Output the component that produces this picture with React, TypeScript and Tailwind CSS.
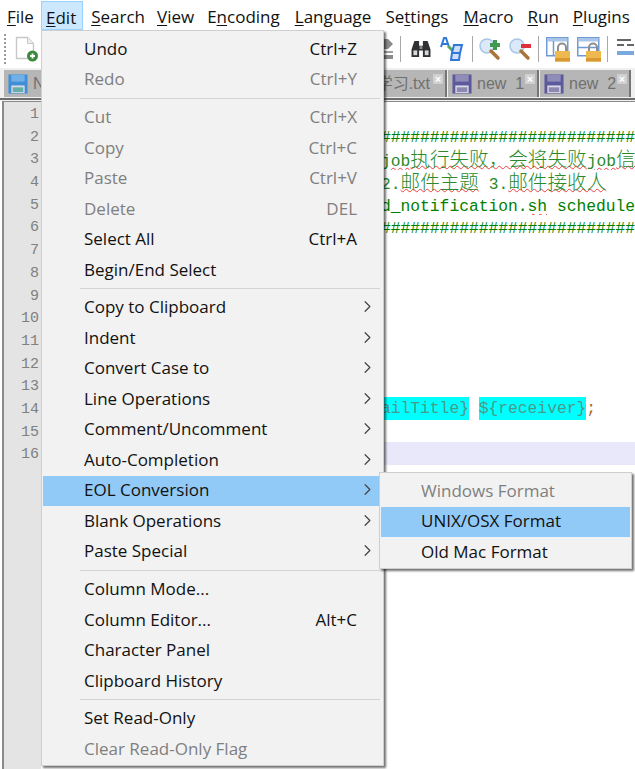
import { ChevronRight } from "lucide-react";

const ui = "font-['Open_Sans','Noto_Sans',sans-serif]";

const menuBar = [
  { pre: "", key: "F", post: "ile", ml: "ml-[7px]" },
  { pre: "", key: "E", post: "dit", ml: "ml-[13px]" },
  { pre: "", key: "S", post: "earch", ml: "ml-[14px]" },
  { pre: "", key: "V", post: "iew", ml: "ml-[12px]" },
  { pre: "E", key: "n", post: "coding", ml: "ml-[13px]" },
  { pre: "", key: "L", post: "anguage", ml: "ml-[15px]" },
  { pre: "Se", key: "t", post: "tings", ml: "ml-[14px]" },
  { pre: "", key: "M", post: "acro", ml: "ml-[15px]" },
  { pre: "", key: "R", post: "un", ml: "ml-[14px]" },
  { pre: "", key: "P", post: "lugins", ml: "ml-[14px]" },
];

type Item = { label?: string; hint?: string; off?: boolean; sub?: boolean; active?: boolean; sep?: boolean };

const editMenu: Item[] = [
  { label: "Undo", hint: "Ctrl+Z" },
  { label: "Redo", hint: "Ctrl+Y", off: true },
  { sep: true },
  { label: "Cut", hint: "Ctrl+X", off: true },
  { label: "Copy", hint: "Ctrl+C", off: true },
  { label: "Paste", hint: "Ctrl+V", off: true },
  { label: "Delete", hint: "DEL", off: true },
  { label: "Select All", hint: "Ctrl+A" },
  { label: "Begin/End Select" },
  { sep: true },
  { label: "Copy to Clipboard", sub: true },
  { label: "Indent", sub: true },
  { label: "Convert Case to", sub: true },
  { label: "Line Operations", sub: true },
  { label: "Comment/Uncomment", sub: true },
  { label: "Auto-Completion", sub: true },
  { label: "EOL Conversion", sub: true, active: true },
  { label: "Blank Operations", sub: true },
  { label: "Paste Special", sub: true },
  { sep: true },
  { label: "Column Mode..." },
  { label: "Column Editor...", hint: "Alt+C" },
  { label: "Character Panel" },
  { label: "Clipboard History" },
  { sep: true },
  { label: "Set Read-Only" },
  { label: "Clear Read-Only Flag", off: true },
];

function MenuRow({ item }: { item: Item }) {
  if (item.sep) {
    return (
      <div className="h-[7.25px] flex items-center pl-[38px] pr-[3px]">
        <div className="h-px w-full bg-[#d4d4d4]" />
      </div>
    );
  }
  return (
    <div
      className={`h-[30.5px] mx-[1px] pb-[2px] flex items-center pl-[41px] pr-[25px] text-[17px] leading-none ${
        item.active ? "bg-[#91c9f7]" : ""
      } ${item.off ? "text-[#7f7f7f]" : "text-[#111111]"}`}
    >
      <span className="flex-1 whitespace-nowrap">{item.label}</span>
      {item.hint && <span>{item.hint}</span>}
      {item.sub && <ChevronRight size={19} strokeWidth={1.5} className="text-[#444] -mr-[20px]" />}
    </div>
  );
}

function Floppy({ tint }: { tint: "blue" | "purple" }) {
  const outer = tint === "blue" ? "#3f8fd8" : "#5c5a9c";
  const inner = tint === "blue" ? "#6fb0e6" : "#8f8cb8";
  const label = tint === "blue" ? "#64b0a8" : "#8d88b0";
  return (
    <svg width="20" height="20" viewBox="0 0 21 21" className="shrink-0">
      <rect x="0.5" y="0.5" width="20" height="20" fill={outer} />
      <rect x="3.5" y="1" width="14" height="7" fill={inner} />
      <rect x="3.5" y="12" width="14" height="8" fill="#d8d8e4" />
      <rect x="5" y="14" width="11" height="5" fill={label} />
    </svg>
  );
}

function TabClose() {
  return (
    <span className="absolute right-[2px] top-[4px] w-[10px] h-[10px] bg-[#d0d0d0] text-white text-[11px] leading-[10px] text-center font-['Liberation_Sans',sans-serif] font-bold">
      ×
    </span>
  );
}

function Tab({ w, children }: { w: string; children: React.ReactNode }) {
  return (
    <div className={`relative h-[27px] ${w} shrink-0 bg-[#b6b6b6] border-r-2 border-[#757575] flex items-center pl-[4px] gap-[5px] text-[#707070] text-[16px] leading-none font-['Liberation_Sans',sans-serif] overflow-hidden`}>
      {children}
      <TabClose />
    </div>
  );
}

function ToolSep() {
  return <div className="w-px h-[26px] bg-[#a8a8a8] shrink-0" />;
}

function NewDocIcon() {
  return (
    <svg width="24" height="26" viewBox="0 0 24 26" className="shrink-0">
      <path d="M1.5 1.5h11l6 6v15h-17z" fill="#fff" stroke="#c8c8c8" strokeWidth="1.4" />
      <path d="M12.5 1.5v6h6" fill="#eee" stroke="#c8c8c8" />
      <circle cx="17.5" cy="20" r="5.5" fill="#3d8a3a" />
      <path d="M15 20h5M17.5 17.5v5" stroke="#fff" strokeWidth="1.8" />
    </svg>
  );
}

function PartialIcon() {
  return (
    <svg width="9" height="20" viewBox="0 0 9 20" className="shrink-0">
      <path d="M0 0h4l5 5-5 5H0z" fill="#8a8a8a" />
      <rect x="0" y="12" width="9" height="2" fill="#a0a0a0" />
      <rect x="0" y="16" width="9" height="4" fill="#8a8a8a" />
    </svg>
  );
}

function BinocularsIcon() {
  return (
    <svg width="22" height="18" viewBox="0 0 22 19" className="shrink-0">
      <path d="M4 1h5v5h4V1h5l3 9v8h-8v-7H9v7H1v-8z" fill="#2f3133" />
      <rect x="3" y="11" width="4" height="5" fill="#d6d9dc" />
      <rect x="15" y="11" width="4" height="5" fill="#d6d9dc" />
      <rect x="9.5" y="6.5" width="3" height="3" fill="#8a8d90" />
    </svg>
  );
}

function FindCharsIcon() {
  return (
    <svg width="24" height="25" viewBox="0 0 24 25" className="shrink-0">
      <path d="M1 10 4 1h2l3 9M2.5 7h5" fill="none" stroke="#2f78d8" strokeWidth="2" />
      <path d="M8 9l6 6" stroke="#5aa860" strokeWidth="3" />
      <path d="M14 8h8l-2 8h-8zM12 16h8l-1 7h-8z" fill="#cfe0f6" stroke="#2f78d8" strokeWidth="2" />
    </svg>
  );
}

function ZoomIcon({ plus }: { plus: boolean }) {
  return (
    <svg width="23" height="24" viewBox="0 0 23 24" className="shrink-0">
      <circle cx="8" cy="9" r="7" fill="#dbe9f8" stroke="#a8c6e6" strokeWidth="1.5" />
      <path d="M12 14l7 7" stroke="#a8743a" strokeWidth="3.5" strokeLinecap="round" />
      {plus ? (
        <path d="M16 3v10M11 8h10" stroke="#3f9a50" strokeWidth="4" />
      ) : (
        <path d="M12 9h10" stroke="#e0303c" strokeWidth="4" />
      )}
    </svg>
  );
}

function LockedWindowIcon({ split }: { split: "v" | "h" }) {
  return (
    <svg width="24" height="25" viewBox="0 0 24 25" className="shrink-0">
      <rect x="0.75" y="0.75" width="21" height="18" fill="#fff" stroke="#6f9bd4" strokeWidth="1.5" />
      <rect x="1" y="1" width="20.5" height="3.5" fill="#a9c6ea" />
      {split === "v" ? (
        <path d="M7.5 4v15" stroke="#6f9bd4" strokeWidth="1.5" />
      ) : (
        <path d="M1 10.5h20" stroke="#6f9bd4" strokeWidth="1.5" />
      )}
      <path d="M12 14V10.5a4 4 0 0 1 8 0V14" fill="none" stroke="#8e8e8e" strokeWidth="2" />
      <rect x="9" y="14" width="15" height="10.5" fill="#eeb94e" />
      <rect x="9" y="21" width="15" height="3.5" fill="#d89a30" />
    </svg>
  );
}

function IndentLinesIcon() {
  return (
    <svg width="18" height="24" viewBox="0 0 18 24" className="shrink-0">
      <path d="M1 3h14M1 8h7" stroke="#333" strokeWidth="1.5" />
      <path d="M11 8h7" stroke="#333" strokeWidth="1.5" />
      <path d="M1 16h18" stroke="#7aa9e0" strokeWidth="4" />
    </svg>
  );
}

const code = "font-['Liberation_Mono',monospace] text-[16.3px] leading-none whitespace-pre";
const hashes = "#".repeat(27);
const wavy = "underline decoration-wavy decoration-[#f04040] decoration-1";

function Han({ children }: { children: React.ReactNode }) {
  return (
    <span className={`font-['Noto_Sans_CJK_SC',monospace] text-[19.6px] leading-none font-light text-[#2a8a2a] ${wavy} underline-offset-[-1px]`}>
      {children}
    </span>
  );
}

function CodeLine({ n, hl, children }: { n: number; hl?: boolean; children?: React.ReactNode }) {
  return (
    <div className="flex h-[22.7px]">
      <div className="w-[37px] shrink-0 bg-[#e4e4e4] text-[#808080] text-right pr-[2px] pt-[2px] text-[15px] leading-[22.7px] font-['Liberation_Mono',monospace]">
        {n}
      </div>
      <div className={`flex-1 min-w-0 overflow-hidden pl-[340px] flex items-center ${hl ? "bg-[#e8e8fa]" : "bg-white"}`}>
        {children}
      </div>
    </div>
  );
}

export default function App() {
  return (
    <div className={`relative w-[635px] h-[769px] overflow-hidden bg-white ${ui}`}>
      {/* menu bar */}
      <div className="h-[30px] pt-[3px] flex items-center text-[17px] text-[#111] leading-none whitespace-nowrap">
        {menuBar.map((m) => (
          <span key={m.key + m.post} className={m.ml}>
            {m.pre}
            <span className="underline underline-offset-2 decoration-1">{m.key}</span>
            {m.post}
          </span>
        ))}
      </div>

      {/* toolbar */}
      <div className="h-[38px] flex items-center">
        <div className="ml-[4px] w-[2px] h-[30px] border-l-2 border-dotted border-[#9a9a9a] shrink-0" />
        <div className="ml-[9px]">
          <NewDocIcon />
        </div>
        <div className="ml-[345px]">
          <PartialIcon />
        </div>
        <div className="ml-[7px]">
          <ToolSep />
        </div>
        <div className="ml-[9px]">
          <BinocularsIcon />
        </div>
        <div className="ml-[8px]">
          <FindCharsIcon />
        </div>
        <div className="ml-[8px]">
          <ToolSep />
        </div>
        <div className="ml-[6px]">
          <ZoomIcon plus />
        </div>
        <div className="ml-[7px]">
          <ZoomIcon plus={false} />
        </div>
        <div className="ml-[6px]">
          <ToolSep />
        </div>
        <div className="ml-[7px]">
          <LockedWindowIcon split="v" />
        </div>
        <div className="ml-[7px]">
          <LockedWindowIcon split="h" />
        </div>
        <div className="ml-[6px]">
          <ToolSep />
        </div>
        <div className="ml-[8px]">
          <IndentLinesIcon />
        </div>
      </div>

      {/* tab bar */}
      <div className="h-[30px] bg-[#f0f0f0] flex items-end pl-[4px] gap-[1px] pb-[1px]">
        <Tab w="w-[110px]">
          <Floppy tint="blue" />
          <span>New</span>
        </Tab>
        <div className="relative h-[27px] w-[332px] shrink-0 bg-[#b6b6b6] border-r-2 border-[#757575] flex items-center justify-end pr-[15px] text-[#707070] text-[16px] leading-none font-['Liberation_Sans','Noto_Sans_CJK_SC',sans-serif]">
          学习.txt
          <TabClose />
        </div>
        <Tab w="w-[91px]">
          <Floppy tint="purple" />
          <span>new&nbsp;&nbsp;1</span>
        </Tab>
        <Tab w="w-[91px]">
          <Floppy tint="purple" />
          <span>new&nbsp;&nbsp;2</span>
        </Tab>
      </div>

      <div className="h-[3px] bg-[#f0f0f0] border-t-2 border-[#6c6c6c]" />

      {/* editor */}
      <div className="ml-[2px] border-l-2 border-t border-[#8a8a8a] bg-white">
        <CodeLine n={1} />
        <CodeLine n={2}>
          <span className={`${code} text-[#008000] pt-[4px]`}>{hashes}</span>
        </CodeLine>
        <CodeLine n={3}>
          <span className={`${code} text-[#2a8a2a] pt-[1px]`}>
            <span className={`${wavy} underline-offset-1`}>job</span>
            <Han>执行失败，会将失败</Han>
            <span className={`${wavy} underline-offset-1`}>job</span>
            <Han>信息</Han>
          </span>
        </CodeLine>
        <CodeLine n={4}>
          <span className={`${code} text-[#2a8a2a] pt-[2px]`}>
            2.<Han>邮件主题</Han> 3.<Han>邮件接收人</Han>
          </span>
        </CodeLine>
        <CodeLine n={5}>
          <span className={`${code} text-[#008000] pt-[6px]`}>
            d_notification.<span className={`${wavy} underline-offset-2`}>sh</span> schedule
          </span>
        </CodeLine>
        <CodeLine n={6}>
          <span className={`${code} text-[#008000] pt-[4px]`}>{hashes}</span>
        </CodeLine>
        <CodeLine n={7} />
        <CodeLine n={8} />
        <CodeLine n={9} />
        <CodeLine n={10} />
        <CodeLine n={11} />
        <CodeLine n={12} />
        <CodeLine n={13} />
        <CodeLine n={14}>
          <span className={`${code} text-[#4a9a8a]`}>
            <span className="bg-[#00ffff] inline-block leading-[24px] h-[23px]">ailTitle{"}"}</span>
            <span> </span>
            <span className="bg-[#00ffff] inline-block leading-[24px] h-[23px]">{"${receiver}"}</span>
            <span className="text-[#a06a30]">;</span>
          </span>
        </CodeLine>
        <CodeLine n={15} />
        <CodeLine n={16} hl />
        <div className="h-[320px] flex">
          <div className="w-[37px] bg-[#e4e4e4]" />
        </div>
      </div>

      {/* Edit highlight */}
      <div className="absolute left-[41px] top-[1px] w-[42px] h-[29px] pt-[3px] bg-[#cce8ff] border border-[#99d1ff] text-[17px] text-[#111] leading-none flex items-center pl-[4px]">
        <span>
          <span className="underline underline-offset-2 decoration-1">E</span>dit
        </span>
      </div>

      {/* Edit menu */}
      <div className="absolute left-[41px] top-[30px] w-[343px] pt-[3px] bg-[#f2f2f2] border border-[#cfcfcf] shadow-[2px_2px_2px_rgba(0,0,0,0.55)]">
        {editMenu.map((item, i) => (
          <MenuRow key={i} item={item} />
        ))}
      </div>

      {/* EOL submenu */}
      <div className="absolute left-[379px] top-[472px] w-[253px] h-[97px] pt-[3px] bg-[#f2f2f2] border border-[#cfcfcf] shadow-[2px_2px_2px_rgba(0,0,0,0.55)]">
        {[
          { label: "Windows Format", off: true },
          { label: "UNIX/OSX Format", active: true },
          { label: "Old Mac Format" },
        ].map((s) => (
          <div
            key={s.label}
            className={`h-[30.5px] mx-[1px] pb-[2px] pl-[40px] flex items-center text-[17px] leading-none whitespace-nowrap ${
              s.active ? "bg-[#91c9f7]" : ""
            } ${s.off ? "text-[#7f7f7f]" : "text-[#111111]"}`}
          >
            {s.label}
          </div>
        ))}
      </div>
    </div>
  );
}
